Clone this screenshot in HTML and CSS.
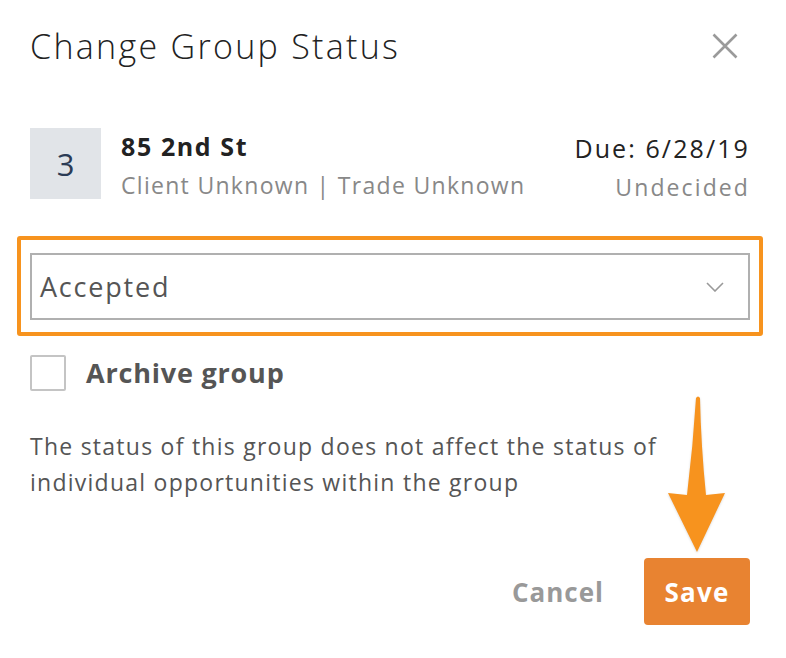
FILE: index.html
```html
<!DOCTYPE html>
<html lang="en">
<head>
  <meta charset="UTF-8" />
  <title>Change Group Status</title>
  <link rel="stylesheet" href="styles.css">
</head>
<body>
  <div class="modal">
    <div class="modal-header">
      <h2>Change Group Status</h2>
      <button class="close-btn" aria-label="Close">
        <svg width="26" height="26" viewBox="0 0 26 26">
          <path d="M1.5 1.5 L24.5 24.5 M24.5 1.5 L1.5 24.5" stroke="#9a9a9a" stroke-width="2.6" fill="none" />
        </svg>
      </button>
    </div>

    <div class="group-row">
      <div class="group-count">3</div>
      <div class="group-info">
        <h4>85 2nd St</h4>
        <p>Client Unknown | Trade Unknown</p>
      </div>
      <div class="group-due">
        <div class="due-date">Due: 6/28/19</div>
        <div class="due-status">Undecided</div>
      </div>
    </div>

    <div class="highlight">
      <div class="status-select">
        <span>Accepted</span>
        <svg width="18" height="10" viewBox="0 0 18 10">
          <path d="M1 1 L9 9 L17 1" stroke="#999" stroke-width="1.6" fill="none" />
        </svg>
      </div>
    </div>

    <label class="archive">
      <span class="checkbox"></span>
      <span class="archive-label">Archive group</span>
    </label>

    <p class="note">The status of this group does not affect the status of individual opportunities within the group</p>

    <div class="modal-footer">
      <button class="cancel-btn">Cancel</button>
      <button class="save-btn">Save</button>
    </div>

    <svg class="pointer" width="70" height="160" viewBox="0 0 70 160">
      <path d="M28 2 Q30 -1 32 2 Q33 50 38 99 L57 97 L29 156 L0 97 L19 99 Q25 50 28 2 Z" fill="#f7931e" />
    </svg>
  </div>
</body>
</html>
```

FILE: styles.css
```css
body {
  margin: 0;
  background: #fff;
  font-family: 'Open Sans', 'Lato', sans-serif;
  color: #222;
}

.modal {
  position: relative;
  width: 786px;
  height: 658px;
  box-sizing: border-box;
  padding: 22px 36px 0 30px;
}

.modal-header {
  display: flex;
  justify-content: space-between;
  align-items: center;
  height: 48px;
}

.modal-header h2 {
  margin: 0;
  font-size: 34px;
  font-weight: 300;
  letter-spacing: 2.3px;
  color: #222;
}

.close-btn {
  background: none;
  border: none;
  padding: 0;
  margin-right: 12px;
  display: flex;
}

.group-row {
  display: flex;
  align-items: flex-start;
  margin-top: 58px;
}

.group-count {
  width: 71px;
  height: 71px;
  background: #e1e4e8;
  color: #2b3b55;
  font-size: 31px;
  display: flex;
  align-items: center;
  justify-content: center;
}

.group-info {
  flex: 1;
  padding-left: 20px;
}

.group-info h4 {
  margin: 2px 0 0;
  font-size: 25px;
  font-weight: 700;
  letter-spacing: 1.6px;
  color: #222;
  line-height: 32px;
}

.group-info p {
  margin: 8px 0 0;
  font-size: 23px;
  letter-spacing: 1.3px;
  color: #888;
  line-height: 30px;
}

.group-due {
  text-align: right;
}

.due-date {
  margin-top: 4px;
  font-size: 25px;
  letter-spacing: 2.1px;
  line-height: 32px;
  color: #222;
}

.due-status {
  margin-top: 8px;
  font-size: 23px;
  letter-spacing: 2.1px;
  line-height: 30px;
  color: #888;
}

.highlight {
  margin: 34px -13px 0 -13px;
  border: 4px solid #f7931e;
  border-radius: 3px;
  padding: 13px 9px 12px 9px;
}

.status-select {
  height: 63px;
  border: 2px solid #b0b0b0;
  display: flex;
  align-items: center;
  justify-content: space-between;
  padding: 0 24px 0 8px;
  font-size: 27px;
  letter-spacing: 1.8px;
  color: #555;
}

.archive {
  display: flex;
  align-items: center;
  margin-top: 18px;
}

.checkbox {
  width: 32px;
  height: 32px;
  border: 2px solid #c4c4c4;
  border-radius: 2px;
}

.archive-label {
  margin-left: 20px;
  font-size: 27px;
  font-weight: 700;
  letter-spacing: 0.8px;
  color: #555;
}

.note {
  margin: 37px 0 0;
  width: 670px;
  font-size: 23px;
  letter-spacing: 1.25px;
  line-height: 36px;
  color: #555;
}

.modal-footer {
  display: flex;
  justify-content: flex-end;
  align-items: center;
  gap: 40px;
  margin-top: 58px;
}

.cancel-btn {
  background: none;
  border: none;
  padding: 0;
  font-family: inherit;
  font-size: 26px;
  font-weight: 700;
  letter-spacing: 1px;
  color: #999;
}

.save-btn {
  width: 106px;
  height: 67px;
  background: #e88331;
  border: none;
  border-radius: 4px;
  color: #fff;
  font-family: inherit;
  font-size: 26px;
  font-weight: 700;
  letter-spacing: 1.2px;
}

.pointer {
  position: absolute;
  left: 668px;
  top: 396px;
  filter: drop-shadow(0 1px 1px rgba(0, 0, 0, 0.15));
}
```
